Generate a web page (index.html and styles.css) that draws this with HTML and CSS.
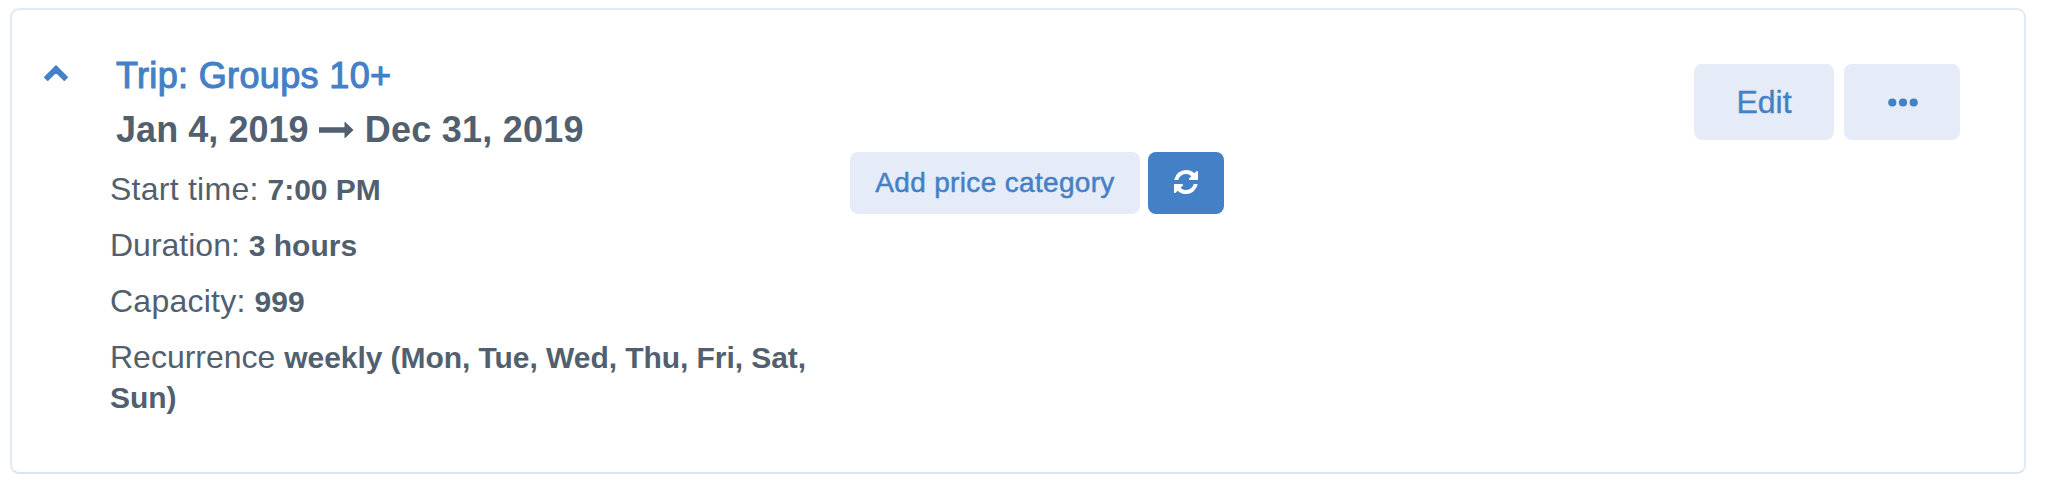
FILE: index.html
```html
<!DOCTYPE html>
<html lang="en">
<head>
    <meta charset="UTF-8">
    <meta name="viewport" content="width=device-width, initial-scale=1.0">
    <title>Trip: Groups 10+</title>
    <link rel="stylesheet" href="styles.css">
</head>
<body>
    <div class="card">
        <div class="toggle">
            <svg class="chevron" viewBox="0 0 26 18" width="26" height="18">
                <path d="M13 2L24.2 13.2L21.3 16.2L13 8L4.7 16.2L1.8 13.2Z" fill="#4480c6" stroke="#4480c6" stroke-width="1.6" stroke-linejoin="round"/>
            </svg>
        </div>
        <div class="info">
            <h2 class="title">Trip: Groups 10+</h2>
            <div class="dates">
                <span class="date-start">Jan 4, 2019</span>
                <svg class="arrow" viewBox="0 0 35 16" width="35" height="16">
                    <path d="M0 5.3h25.5V0.5q0-1 1-0.2L34.5 8L26.5 15.7q-1 0.8-1-0.2V10.7H0z" fill="#515f6f"/>
                </svg>
                <span class="date-end">Dec 31, 2019</span>
            </div>
            <div class="details">
                <p class="row"><span class="label wide">Start time:</span> <b>7:00 PM</b></p>
                <p class="row"><span class="label">Duration:</span> <b>3 hours</b></p>
                <p class="row"><span class="label wide">Capacity:</span> <b>999</b></p>
                <p class="row"><span class="label">Recurrence</span> <b class="days">weekly (Mon, Tue, Wed, Thu, Fri, Sat, Sun)</b></p>
            </div>
        </div>
        <div class="prices">
            <button class="btn btn-add">Add price category</button>
            <button class="btn btn-refresh">
                <svg viewBox="0 0 1792 1792" width="28" height="28">
                    <path fill="#fff" d="M1639 1056q0 5-1 7-64 268-268 434.5t-478 166.5q-146 0-282.5-55t-243.5-157l-129 129q-19 19-45 19t-45-19-19-45v-448q0-26 19-45t45-19h448q26 0 45 19t19 45-19 45l-137 137q71 66 161 102t187 36q134 0 250-65t186-179q11-17 53-117 8-23 30-23h192q13 0 22.5 9.5t9.5 22.5zm25-800v448q0 26-19 45t-45 19h-448q-26 0-45-19t-19-45 19-45l138-138q-148-137-349-137-134 0-250 65t-186 179q-11 17-53 117-8 23-30 23h-199q-13 0-22.5-9.5t-9.5-22.5v-7q65-268 270-434.5t480-166.5q146 0 284 55.5t245 156.5l130-129q19-19 45-19t45 19 19 45z"/>
                </svg>
            </button>
        </div>
        <div class="actions">
            <button class="btn btn-edit">Edit</button>
            <button class="btn btn-more">
                <svg viewBox="0 0 30 9" width="30" height="9">
                    <g fill="#4480c6">
                        <circle cx="4.3" cy="4.5" r="4.1"/>
                        <circle cx="15" cy="4.5" r="4.1"/>
                        <circle cx="25.7" cy="4.5" r="4.1"/>
                    </g>
                </svg>
            </button>
        </div>
    </div>
</body>
</html>
```

FILE: styles.css
```css
* {
    box-sizing: border-box;
}

body {
    margin: 0;
    padding: 8px 20px 0 10px;
    background-color: #fff;
    color: #515f6f;
    font-family: "Liberation Sans", Arial, sans-serif;
}

.card {
    display: grid;
    grid-template-columns: 98px 740px 1fr auto;
    height: 466px;
    padding-right: 64px;
    border: 2px solid #e2eaf6;
    border-bottom-color: #dbe4f0;
    border-radius: 9px;
}

.toggle {
    padding: 54px 0 0 31px;
}

.chevron {
    display: block;
}

.title {
    margin: 39px 0 0 6px;
    font-size: 36px;
    font-weight: normal;
    line-height: 54px;
    letter-spacing: 0.35px;
    color: #4480c6;
    -webkit-text-stroke: 1.1px #4480c6;
}

.dates {
    display: flex;
    align-items: center;
    margin-left: 6px;
    font-size: 36px;
    font-weight: bold;
    line-height: 54px;
    white-space: nowrap;
}

.date-start {
    letter-spacing: 0.05px;
}

.date-end {
    letter-spacing: 0.25px;
}

.arrow {
    margin: 0 11px 0 10px;
}

.details {
    padding-top: 12px;
}

.row {
    margin: 0 0 16px;
    font-size: 32px;
    line-height: 40px;
}

.row b {
    font-size: 30px;
    line-height: 36px;
}

.wide {
    letter-spacing: 0.25px;
}

.days {
    letter-spacing: -0.06px;
}

.btn {
    display: flex;
    align-items: center;
    justify-content: center;
    padding: 0;
    border: none;
    border-radius: 8px;
    background-color: #e5ecf8;
    color: #4480c6;
    font-family: inherit;
    cursor: pointer;
}

.prices {
    display: flex;
    gap: 8px;
    padding-top: 142px;
}

.btn-add {
    width: 290px;
    height: 62px;
    font-size: 28px;
    letter-spacing: 0.33px;
    -webkit-text-stroke: 0.5px #4480c6;
}

.btn-refresh {
    width: 76px;
    height: 62px;
    padding-bottom: 2px;
    background-color: #4480c6;
}

.actions {
    display: flex;
    gap: 10px;
    padding-top: 54px;
}

.btn-edit {
    width: 140px;
    height: 76px;
    font-size: 32px;
    -webkit-text-stroke: 0.4px #4480c6;
}

.btn-more {
    width: 116px;
    height: 76px;
    padding: 1px 0 0 2px;
}
```
